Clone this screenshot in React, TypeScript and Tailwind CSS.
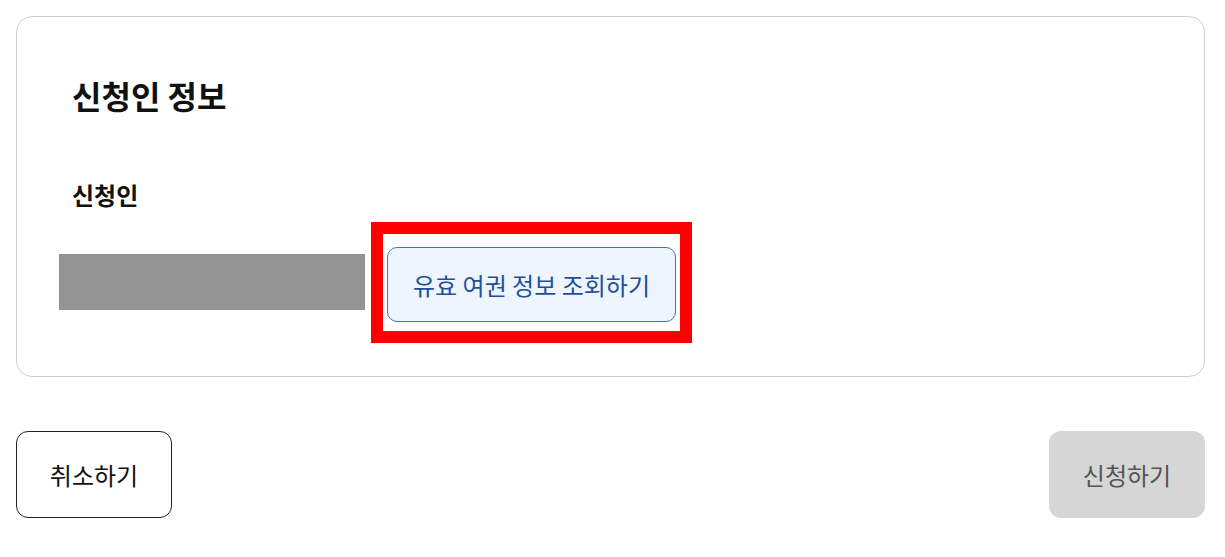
export default function App() {
  return (
    <div className="min-h-screen bg-white pt-4 pl-4 pr-5 pb-4 font-['Noto_Sans_CJK_KR','Noto_Sans',sans-serif] text-[#111]">
      {/* 신청인 정보 카드 */}
      <section className="rounded-2xl border border-[#cfcfcf] pl-[55px] pr-6 pt-[56px] pb-[33px]">
        <h2 className="text-[32px] font-bold leading-[44px] text-[#111]">신청인 정보</h2>
        <h3 className="mt-[62px] text-[24px] font-bold leading-[32px] text-[#111]">신청인</h3>
        <div className="mt-[11px] -ml-[13px] flex items-center gap-[6px]">
          <div className="mb-[2px] h-[56px] w-[306px] bg-[#939393]" />
          <div className="border-[12px] border-[#ff0000] px-[4px] pt-[13px] pb-[9px]">
            <button className="flex h-[75px] w-[289px] items-center justify-center rounded-[10px] border border-[#4a72b0] bg-[#eef5ff] text-[24px] text-[#1d4f9c]">
              유효 여권 정보 조회하기
            </button>
          </div>
        </div>
      </section>

      {/* 하단 버튼 */}
      <div className="mt-[54px] flex items-center justify-between">
        <button className="flex h-[87px] w-[156px] items-center justify-center rounded-xl border border-[#222] bg-white text-[24px] text-[#111]">
          취소하기
        </button>
        <button className="flex h-[87px] w-[156px] items-center justify-center rounded-xl bg-[#d6d6d6] text-[24px] text-[#555]">
          신청하기
        </button>
      </div>
    </div>
  );
}
